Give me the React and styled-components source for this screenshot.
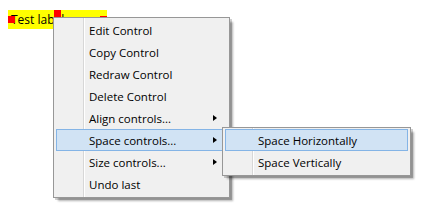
import React from "react";
import styled, { createGlobalStyle } from "styled-components";

const Global = createGlobalStyle`
  html, body { margin: 0; padding: 0; background: #ffffff; }
  body { font-family: "Open Sans", "Noto Sans", sans-serif; }
`;

const Page = styled.div`
  position: relative;
  width: 421px;
  height: 206px;
  padding: 10px 0 0 8px;
  box-sizing: border-box;
`;

const Label = styled.div`
  position: relative;
  width: 99px;
  height: 19px;
  background: #ffff00;
  font-family: "Open Sans", "Noto Sans", sans-serif;
  font-size: 12px;
  line-height: 19px;
  color: #000;
  padding-left: 3px;
  box-sizing: border-box;
  white-space: nowrap;
  overflow: hidden;
`;

const Handle = styled.span`
  position: absolute;
  width: 7px;
  height: 7px;
  background: #ff0000;
  left: ${(p) => p.$x}px;
  top: ${(p) => p.$y}px;
`;

const Menu = styled.div`
  position: absolute;
  left: ${(p) => p.$left}px;
  top: ${(p) => p.$top}px;
  width: ${(p) => p.$width}px;
  box-sizing: border-box;
  border: 1px solid #979797;
  padding: 1px 2px 2px 2px;
  background:
    linear-gradient(
      to right,
      transparent 29px,
      #d7d7d7 29px,
      #d7d7d7 30px,
      #ffffff 30px,
      #ffffff 31px,
      transparent 31px
    ),
    #f0f0f0;
  box-shadow: 2px 2px 0 0 rgba(0, 0, 0, 0.18), 4px 4px 2px -1px rgba(0, 0, 0, 0.3);
  display: flex;
  flex-direction: column;
  font-family: "Open Sans", "Noto Sans", sans-serif;
  font-size: 11.5px;
  color: #000;
`;

const Item = styled.div`
  position: relative;
  height: 22px;
  box-sizing: border-box;
  display: flex;
  align-items: center;
  justify-content: space-between;
  padding: 0 9px 0 32px;
  border: 1px solid ${(p) => (p.$hot ? "#84b4e6" : "transparent")};
  background: ${(p) => (p.$hot ? "#d1e3f4" : "transparent")};
  white-space: nowrap;
`;

const Arrow = styled.span`
  width: 0;
  height: 0;
  border-top: 3.5px solid transparent;
  border-bottom: 3.5px solid transparent;
  border-left: 4px solid #000;
`;

const mainItems = [
  { label: "Edit Control" },
  { label: "Copy Control" },
  { label: "Redraw Control" },
  { label: "Delete Control" },
  { label: "Align controls...", sub: true },
  { label: "Space controls...", sub: true, hot: true },
  { label: "Size controls...", sub: true },
  { label: "Undo last" },
];

const subItems = [
  { label: "Space Horizontally", hot: true },
  { label: "Space Vertically" },
];

export default function App() {
  return (
    <>
      <Global />
      <Page>
        <Label>
          Test label
          <Handle $x={0} $y={6} />
          <Handle $x={46} $y={0} />
          <Handle $x={92} $y={6} />
        </Label>
        <Menu $left={53} $top={17} $width={177}>
          {mainItems.map((it) => (
            <Item key={it.label} $hot={it.hot}>
              <span>{it.label}</span>
              {it.sub && <Arrow />}
            </Item>
          ))}
        </Menu>
        <Menu $left={222} $top={127} $width={189}>
          {subItems.map((it) => (
            <Item key={it.label} $hot={it.hot}>
              <span>{it.label}</span>
            </Item>
          ))}
        </Menu>
      </Page>
    </>
  );
}
